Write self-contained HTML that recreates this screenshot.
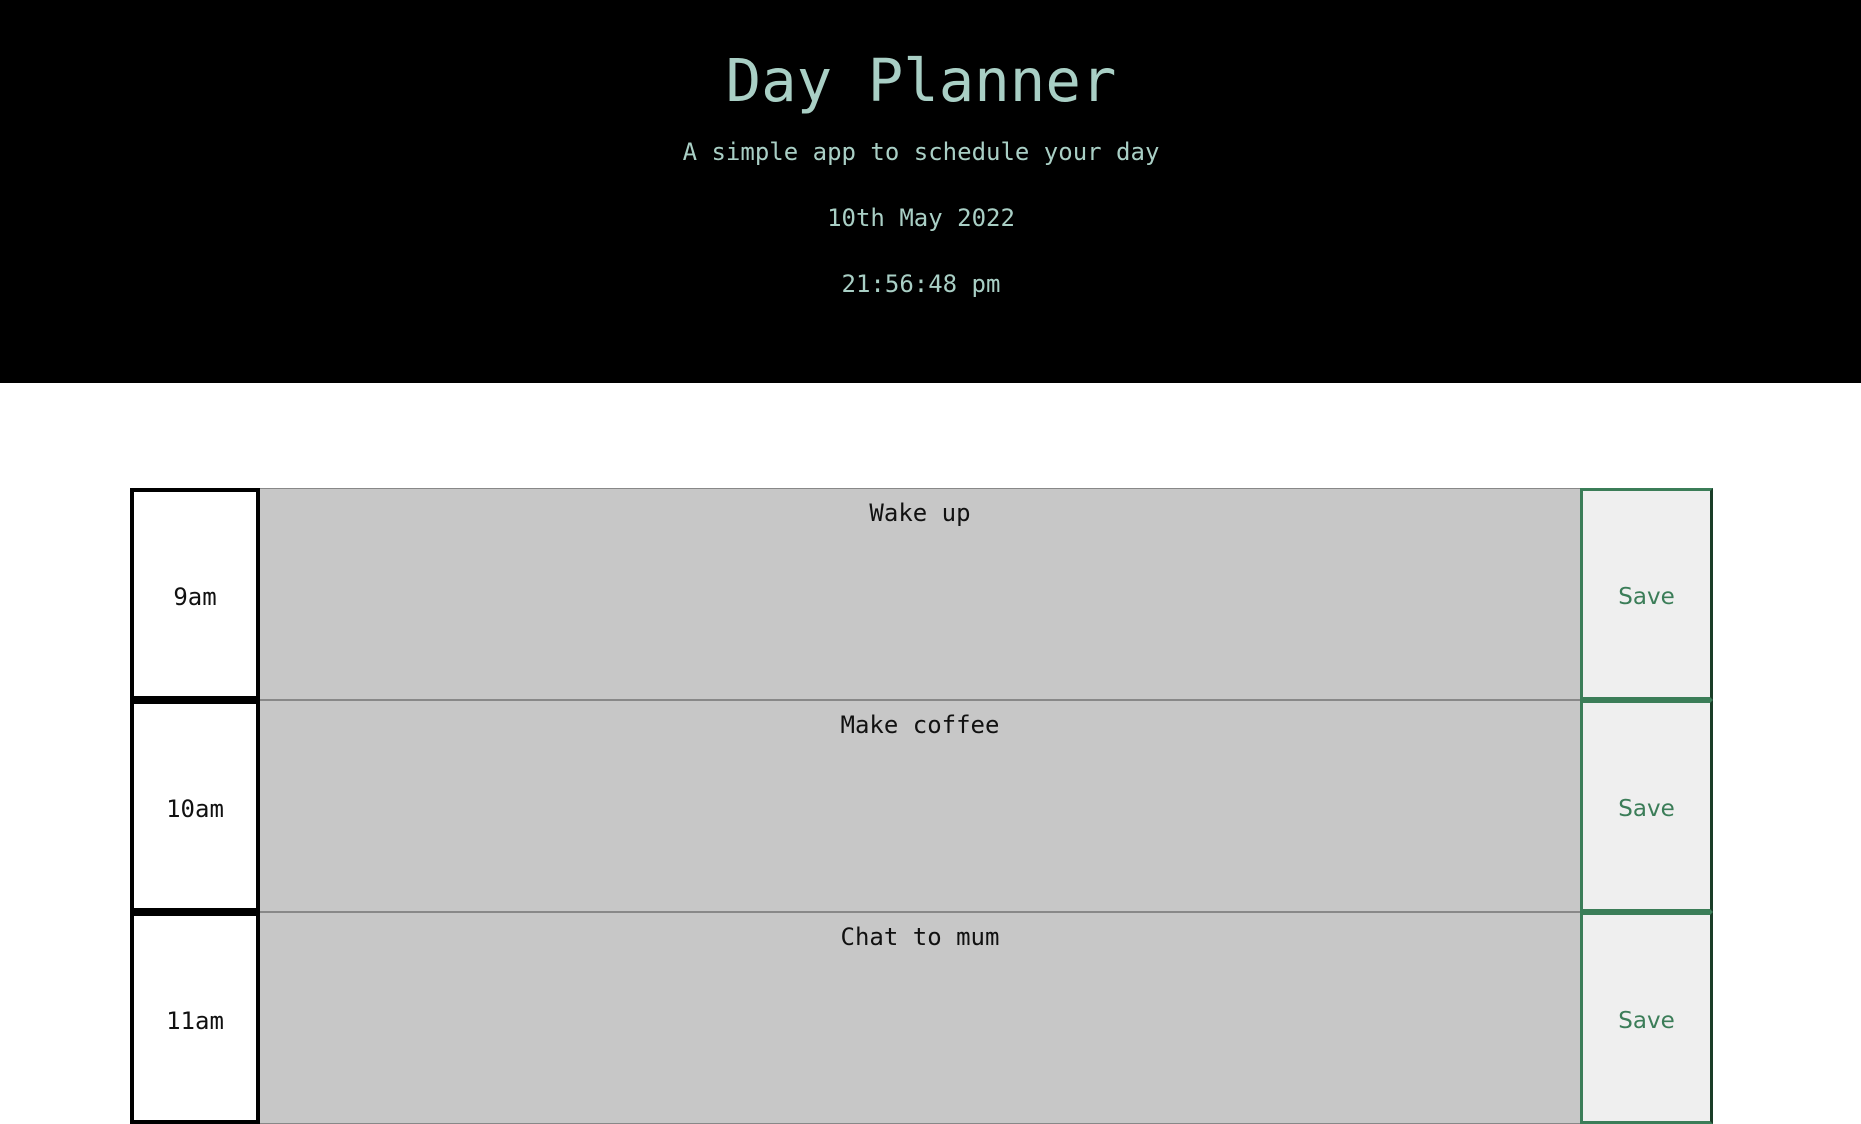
<!DOCTYPE html>
<html><head><meta charset="utf-8"><style>
*{box-sizing:border-box;margin:0;padding:0}
body{width:1861px;height:1047px;overflow:hidden;background:#fff;font-family:"DejaVu Sans Mono","Liberation Mono",monospace}
header{position:absolute;left:0;top:0;width:1861px;height:383px;background:#000;color:#a9cfc5;text-align:center}
h1{position:absolute;left:0;width:1842px;top:46px;font-size:59px;font-weight:normal;line-height:70px}
.l{position:absolute;left:0;width:1842px;font-size:24px;line-height:30px}
.row{position:absolute;left:130px;width:1583px;height:212px}
.hr{position:absolute;left:0;top:0;width:130px;height:212px;border:4px solid #000;display:flex;align-items:center;justify-content:center;font-size:24px;color:#111;background:#fff;padding-top:5px}
.ta{position:absolute;left:130px;top:0;width:1320px;height:212px;background:#c7c7c7;border-top:1px solid #888;border-bottom:1px solid #888;text-align:center;font-size:24px;color:#111;padding-top:9px;line-height:30px}
.sv{position:absolute;left:1450px;top:0;width:133px;height:212px;background:#efefef;border:3px solid #3b7d58;border-right-color:#1a3d28;display:flex;align-items:center;justify-content:center;font-family:"DejaVu Sans","Liberation Sans",sans-serif;font-size:23px;color:#3b7d58;padding-top:6px}
</style></head><body>
<header>
<h1>Day Planner</h1>
<div class="l" style="top:137px">A simple app to schedule your day</div>
<div class="l" style="top:203px">10th May 2022</div>
<div class="l" style="top:269px">21:56:48 pm</div>
</header>
<div class="row" style="top:488px"><div class="hr">9am</div><div class="ta">Wake up</div><div class="sv">Save</div></div>
<div class="row" style="top:700px"><div class="hr">10am</div><div class="ta">Make coffee</div><div class="sv">Save</div></div>
<div class="row" style="top:912px"><div class="hr">11am</div><div class="ta">Chat to mum</div><div class="sv">Save</div></div>
</body></html>
